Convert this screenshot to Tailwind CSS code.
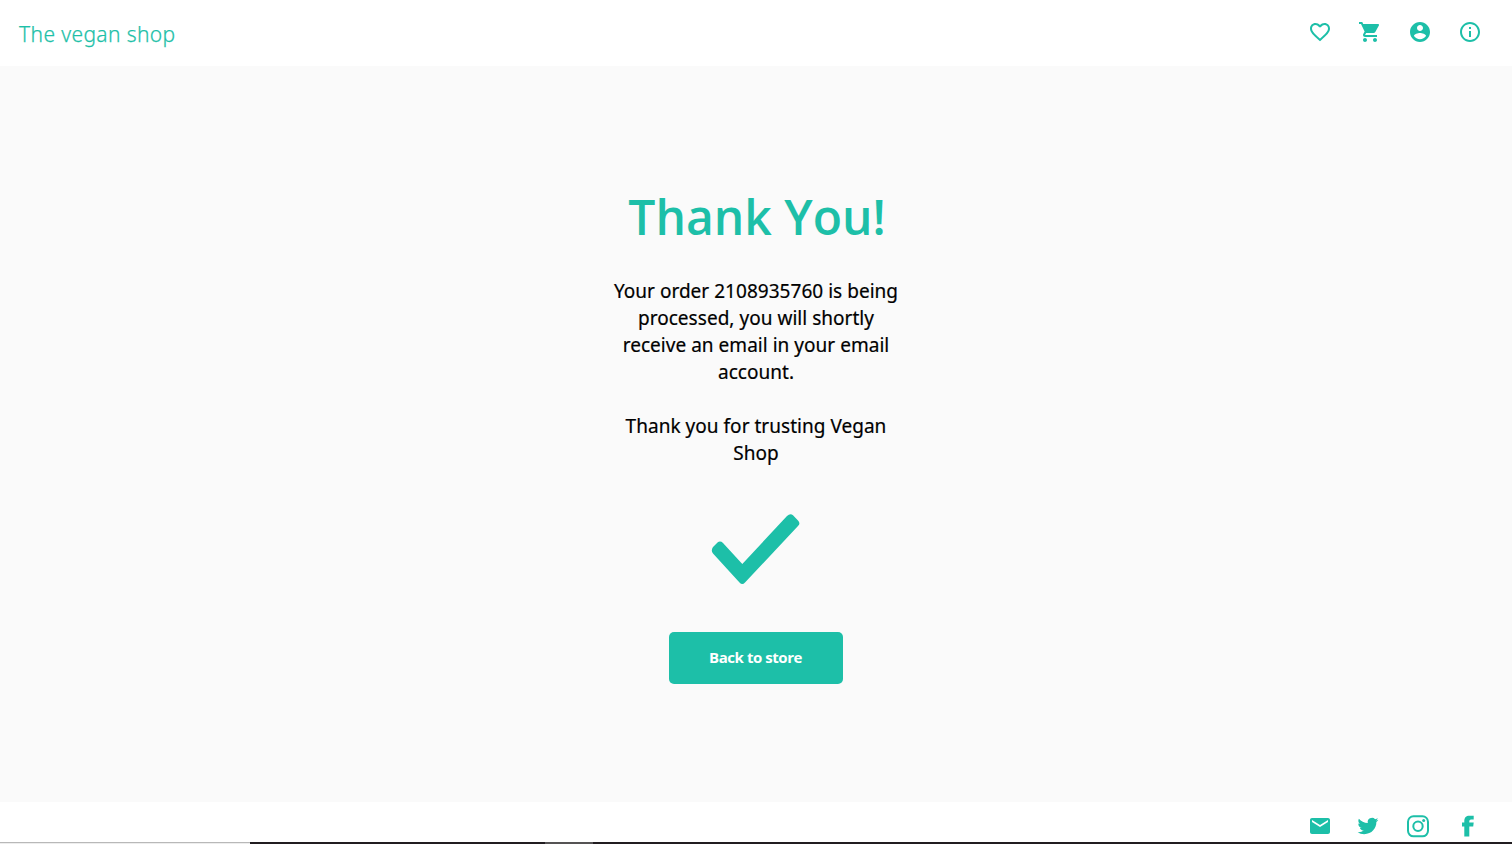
<!DOCTYPE html>
<html lang="en">
<head>
<meta charset="utf-8">
<title>The vegan shop</title>
<script src="https://cdn.jsdelivr.net/npm/@tailwindcss/browser@4"></script>
</head>
<body class="flex h-screen flex-col overflow-hidden bg-[#fafafa] font-['Open_Sans',sans-serif] text-black">
<header class="flex h-[66px] shrink-0 items-center justify-between bg-white pr-[30px] pl-[19px]">
  <a class="pt-px font-['Noto_Sans','Open_Sans',sans-serif] text-[21px] leading-[30px] font-light tracking-[0.37px] text-[#1dbfa8] [-webkit-text-stroke:0.25px_#1dbfa8]">The vegan shop</a>
  <nav class="-mt-0.5 flex gap-[26px] text-[#1dbfa8]">
    <svg class="size-6" viewBox="0 0 24 24" fill="currentColor"><path d="M16.5 3c-1.74 0-3.41.81-4.5 2.09C10.91 3.81 9.24 3 7.5 3 4.42 3 2 5.42 2 8.5c0 3.78 3.4 6.86 8.55 11.54L12 21.35l1.45-1.32C18.6 15.36 22 12.28 22 8.5 22 5.42 19.58 3 16.5 3zm-4.4 15.55l-.1.1-.1-.1C7.14 14.24 4 11.39 4 8.5 4 6.5 5.5 5 7.5 5c1.54 0 3.04.99 3.57 2.36h1.87C13.46 5.99 14.96 5 16.5 5c2 0 3.5 1.5 3.5 3.5 0 2.89-3.14 5.74-7.9 10.05z"/></svg>
    <svg class="size-6" viewBox="0 0 24 24" fill="currentColor"><path d="M7 18c-1.1 0-1.99.9-1.99 2S5.900 22 7 22s2-.9 2-2-.9-2-2-2zM1 2v2h2l3.600 7.590-1.350 2.450c-.16.28-.25.61-.25.960 0 1.100.9 2 2 2h12v-2H7.420c-.14 0-.25-.11-.25-.25l.03-.12.9-1.630h7.450c.75 0 1.410-.41 1.750-1.030l3.580-6.490c.08-.14.12-.31.12-.48 0-.55-.45-1-1-1H5.210l-.94-2H1zm16 16c-1.100 0-1.990.9-1.990 2s.89 2 1.990 2 2-.9 2-2-.9-2-2-2z"/></svg>
    <svg class="size-6" viewBox="0 0 24 24" fill="currentColor"><path d="M12 2C6.480 2 2 6.480 2 12s4.480 10 10 10 10-4.480 10-10S17.520 2 12 2zm0 3c1.660 0 3 1.340 3 3s-1.340 3-3 3-3-1.340-3-3 1.340-3 3-3zm0 14.200c-2.500 0-4.710-1.280-6-3.220.03-1.990 4-3.080 6-3.080 1.990 0 5.970 1.090 6 3.080-1.290 1.940-3.500 3.220-6 3.220z"/></svg>
    <svg class="size-6" viewBox="0 0 24 24" fill="currentColor"><path d="M11 7h2v2h-2zm0 4h2v6h-2zm1-9C6.480 2 2 6.480 2 12s4.480 10 10 10 10-4.480 10-10S17.520 2 12 2zm0 18c-4.410 0-8-3.590-8-8s3.590-8 8-8 8 3.590 8 8-3.590 8-8 8z"/></svg>
  </nav>
</header>
<main class="flex flex-1 flex-col items-center pt-[118px]">
  <h1 class="pl-[2px] text-[48px] leading-[65px] font-semibold text-[#1dbfa8]">Thank You!</h1>
  <div class="mt-[29px] w-[300px] text-center font-['Noto_Sans','Open_Sans',sans-serif] text-[19px] leading-[27px] font-normal tracking-[0.03px] [-webkit-text-stroke:0.2px_black]">
    <p>Your order 2108935760 is being processed, you will shortly receive an email in your email account.</p>
    <p class="mt-[27px]">Thank you for trusting Vegan Shop</p>
  </div>
  <svg class="mt-[46px] h-[72px] w-[90px] text-[#1dbfa8]" viewBox="0 0 90 72" fill="currentColor"><path d="M2 34 6.500 29.500Q9.300 27.500 12 30L31.300 51 76 3Q79.300 0 82 2.300L87 7.500Q89.800 10.500 87 13L34 69.500Q31.300 72.500 28.500 69.500L2 40.500Q-.4 37.500 2 34z"/></svg>
  <button class="mt-[47px] h-[52px] w-[174px] rounded-[5px] bg-[#1dbfa8] pr-px pb-0.5 text-[15px] leading-5 font-bold tracking-[-0.45px] text-white">Back to store</button>
</main>
<footer class="flex h-10 shrink-0 items-start justify-end bg-white pt-3 pr-8 text-[#1dbfa8]">
  <svg class="mr-[26px] size-6" viewBox="0 0 24 24" fill="currentColor"><path d="M20 4H4c-1.100 0-1.990.9-1.990 2L2 18c0 1.100.9 2 2 2h16c1.100 0 2-.9 2-2V6c0-1.100-.9-2-2-2zm0 4l-8 5-8-5V6l8 5 8-5v2z"/></svg>
  <svg class="mt-0.5 mr-7 size-5 scale-x-105" viewBox="0 0 24 24" fill="currentColor"><path d="M23.950 4.570a10 10 0 0 1-2.820.770 4.960 4.960 0 0 0 2.160-2.720c-.95.550-2 .960-3.130 1.180a4.920 4.920 0 0 0-8.380 4.480C7.690 8.090 4.070 6.130 1.640 3.160a4.820 4.820 0 0 0-.67 2.480c0 1.710.87 3.210 2.190 4.100a4.900 4.900 0 0 1-2.230-.620v.06a4.920 4.920 0 0 0 3.950 4.830 5 5 0 0 1-2.210.08 4.940 4.940 0 0 0 4.600 3.420A9.870 9.870 0 0 1 0 19.540a14 14 0 0 0 7.550 2.210c9.050 0 14-7.500 14-13.980 0-.21 0-.42-.02-.63a9.940 9.940 0 0 0 2.420-2.570z"/></svg>
  <svg class="mr-[26px] size-6" viewBox="0 0 24 24" fill="none" stroke="currentColor" stroke-width="2"><rect x="2" y="2.300" width="20" height="20" rx="5.500"/><circle cx="12" cy="12.300" r="4.700"/><circle cx="17.700" cy="6.500" r="1.500" fill="currentColor" stroke="none"/></svg>
  <svg class="size-6" viewBox="0 0 24 24" fill="currentColor"><path d="M8.300 22.500V12.500H6V8.500H8.300V7C8.300 3.300 10.200 1.700 13.300 1.700H17.700V5.500H15Q13.300 5.500 13.300 7V8.500H17.700L17.200 12.500H13.300V22.500z"/></svg>
</footer>
<div class="flex h-0.5 shrink-0 bg-[#211d20]">
  <div class="w-[250px] border-t border-[#b8b8b8] bg-[#ededed]"></div>
  <div class="ml-[295px] w-12 bg-[#555354]"></div>
</div>
</body>
</html>
